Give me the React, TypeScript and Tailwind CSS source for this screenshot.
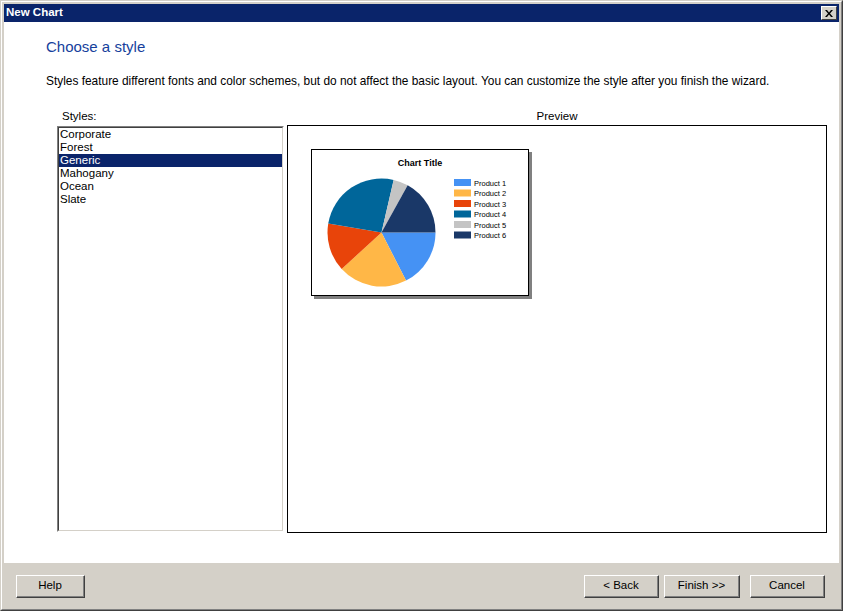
import React from 'react';

const styles = ['Corporate', 'Forest', 'Generic', 'Mahogany', 'Ocean', 'Slate'];

const slices = [
  { name: 'Product 1', color: '#4592f4', end: 63 },
  { name: 'Product 2', color: '#ffb747', end: 137.5 },
  { name: 'Product 3', color: '#e8440a', end: 189.5 },
  { name: 'Product 4', color: '#00669a', end: 283 },
  { name: 'Product 5', color: '#c4c4c4', end: 299 },
  { name: 'Product 6', color: '#1a3868', end: 360 },
];

const ClassicButton: React.FC<{ label: string; width: string }> = ({ label, width }) => (
  <button
    className={`${width} h-[23px] border-t border-l border-b border-r border-t-white border-l-white border-b-[#404040] border-r-[#404040] bg-[#d4d0c8]`}
  >
    <div className="w-full h-full border-b border-r border-b-[#808080] border-r-[#808080] flex items-center justify-center text-[11.5px] text-black">
      {label}
    </div>
  </button>
);

const PieChart: React.FC = () => {
  const cx = 69.5;
  const cy = 82.5;
  const r = 54;
  let start = 0;
  const pt = (deg: number) => {
    const a = (deg * Math.PI) / 180;
    return `${(cx + r * Math.cos(a)).toFixed(2)} ${(cy + r * Math.sin(a)).toFixed(2)}`;
  };

  return (
    <svg width="216" height="145" viewBox="0 0 216 145" className="block">
      <text x="108" y="16" textAnchor="middle" fontFamily="Liberation Sans, Arial, sans-serif" fontSize="9" fontWeight="bold" fill="#000">
        Chart Title
      </text>
      {slices.map((s) => {
        const large = s.end - start > 180 ? 1 : 0;
        const d = `M ${cx} ${cy} L ${pt(start)} A ${r} ${r} 0 ${large} 1 ${pt(s.end)} Z`;
        start = s.end;
        return <path key={s.name} d={d} fill={s.color} />;
      })}
      {slices.map((s, i) => (
        <g key={s.name + 'l'}>
          <rect x="142" y={29 + i * 10.5} width="17" height="7" fill={s.color} />
          <text x="162" y={35.5 + i * 10.5} fontFamily="Liberation Sans, Arial, sans-serif" fontSize="7.5" fill="#000">
            {s.name}
          </text>
        </g>
      ))}
    </svg>
  );
};

export default function App() {
  return (
    <div className="w-[843px] h-[611px] bg-[#d4d0c8] border border-t-[#d4d0c8] border-l-[#d4d0c8] border-b-[#404040] border-r-[#404040]" style={{ fontFamily: '"Liberation Sans", Arial, sans-serif' }}>
      <div className="w-full h-full border border-t-white border-l-white border-b-[#808080] border-r-[#808080] p-[2px] flex flex-col">
        {/* Title bar */}
        <div className="h-[18px] bg-[#0a246a] flex items-center justify-between pl-[2px] pr-[2px]">
          <span className="text-white font-bold text-[11.5px] leading-none">New Chart</span>
          <div className="w-[16px] h-[14px] bg-[#d4d0c8] border border-t-white border-l-white border-b-[#404040] border-r-[#404040] flex items-center justify-center">
            <svg width="8" height="7" viewBox="0 0 8 7">
              <path d="M0 0h2l2 2.5L6 0h2L5 3.5 8 7H6L4 4.5 2 7H0l3-3.5z" fill="#000" />
            </svg>
          </div>
        </div>

        {/* Client area */}
        <div className="h-[541px] bg-white flex flex-col">
          <div className="pl-[42px] pt-[15px] text-[15px] leading-[20px] text-[#163f9c]">Choose a style</div>
          <div className="pl-[42px] pt-[17px] text-[11.9px] leading-[14px] text-black">
            Styles feature different fonts and color schemes, but do not affect the basic layout. You can customize the style after you finish the wizard.
          </div>

          <div className="flex pl-[53px] pt-[21px] gap-[3px]">
            {/* Styles list */}
            <div className="w-[227px] flex flex-col">
              <div className="pl-[5px] h-[17px] text-[11.5px] leading-[14px] text-black">Styles:</div>
              <div className="h-[406px] border border-t-[#808080] border-l-[#808080] border-b-white border-r-white">
                <div className="w-full h-full border border-t-[#404040] border-l-[#404040] border-b-[#d4d0c8] border-r-[#d4d0c8] bg-white">
                  {styles.map((s) => (
                    <div
                      key={s}
                      className={`h-[13px] pl-[1px] text-[11.5px] leading-[13px] ${s === 'Generic' ? 'bg-[#0a246a] text-white' : 'text-black'}`}
                    >
                      {s}
                    </div>
                  ))}
                </div>
              </div>
            </div>

            {/* Preview */}
            <div className="w-[540px] flex flex-col">
              <div className="h-[16px] text-center text-[11.5px] leading-[14px] text-black">Preview</div>
              <div className="h-[408px] border border-black p-[23px]">
                <div className="w-[218px] h-[147px] bg-white border border-black shadow-[3px_3px_0_#808080]">
                  <PieChart />
                </div>
              </div>
            </div>
          </div>
        </div>

        {/* Footer */}
        <div className="flex-1 flex items-start pt-[12px] pl-[12px] pr-[14px]">
          <ClassicButton label="Help" width="w-[69px]" />
          <div className="flex-1" />
          <ClassicButton label="< Back" width="w-[75px]" />
          <div className="w-[5px]" />
          <ClassicButton label="Finish >>" width="w-[76px]" />
          <div className="w-[10px]" />
          <ClassicButton label="Cancel" width="w-[75px]" />
        </div>
      </div>
    </div>
  );
}
